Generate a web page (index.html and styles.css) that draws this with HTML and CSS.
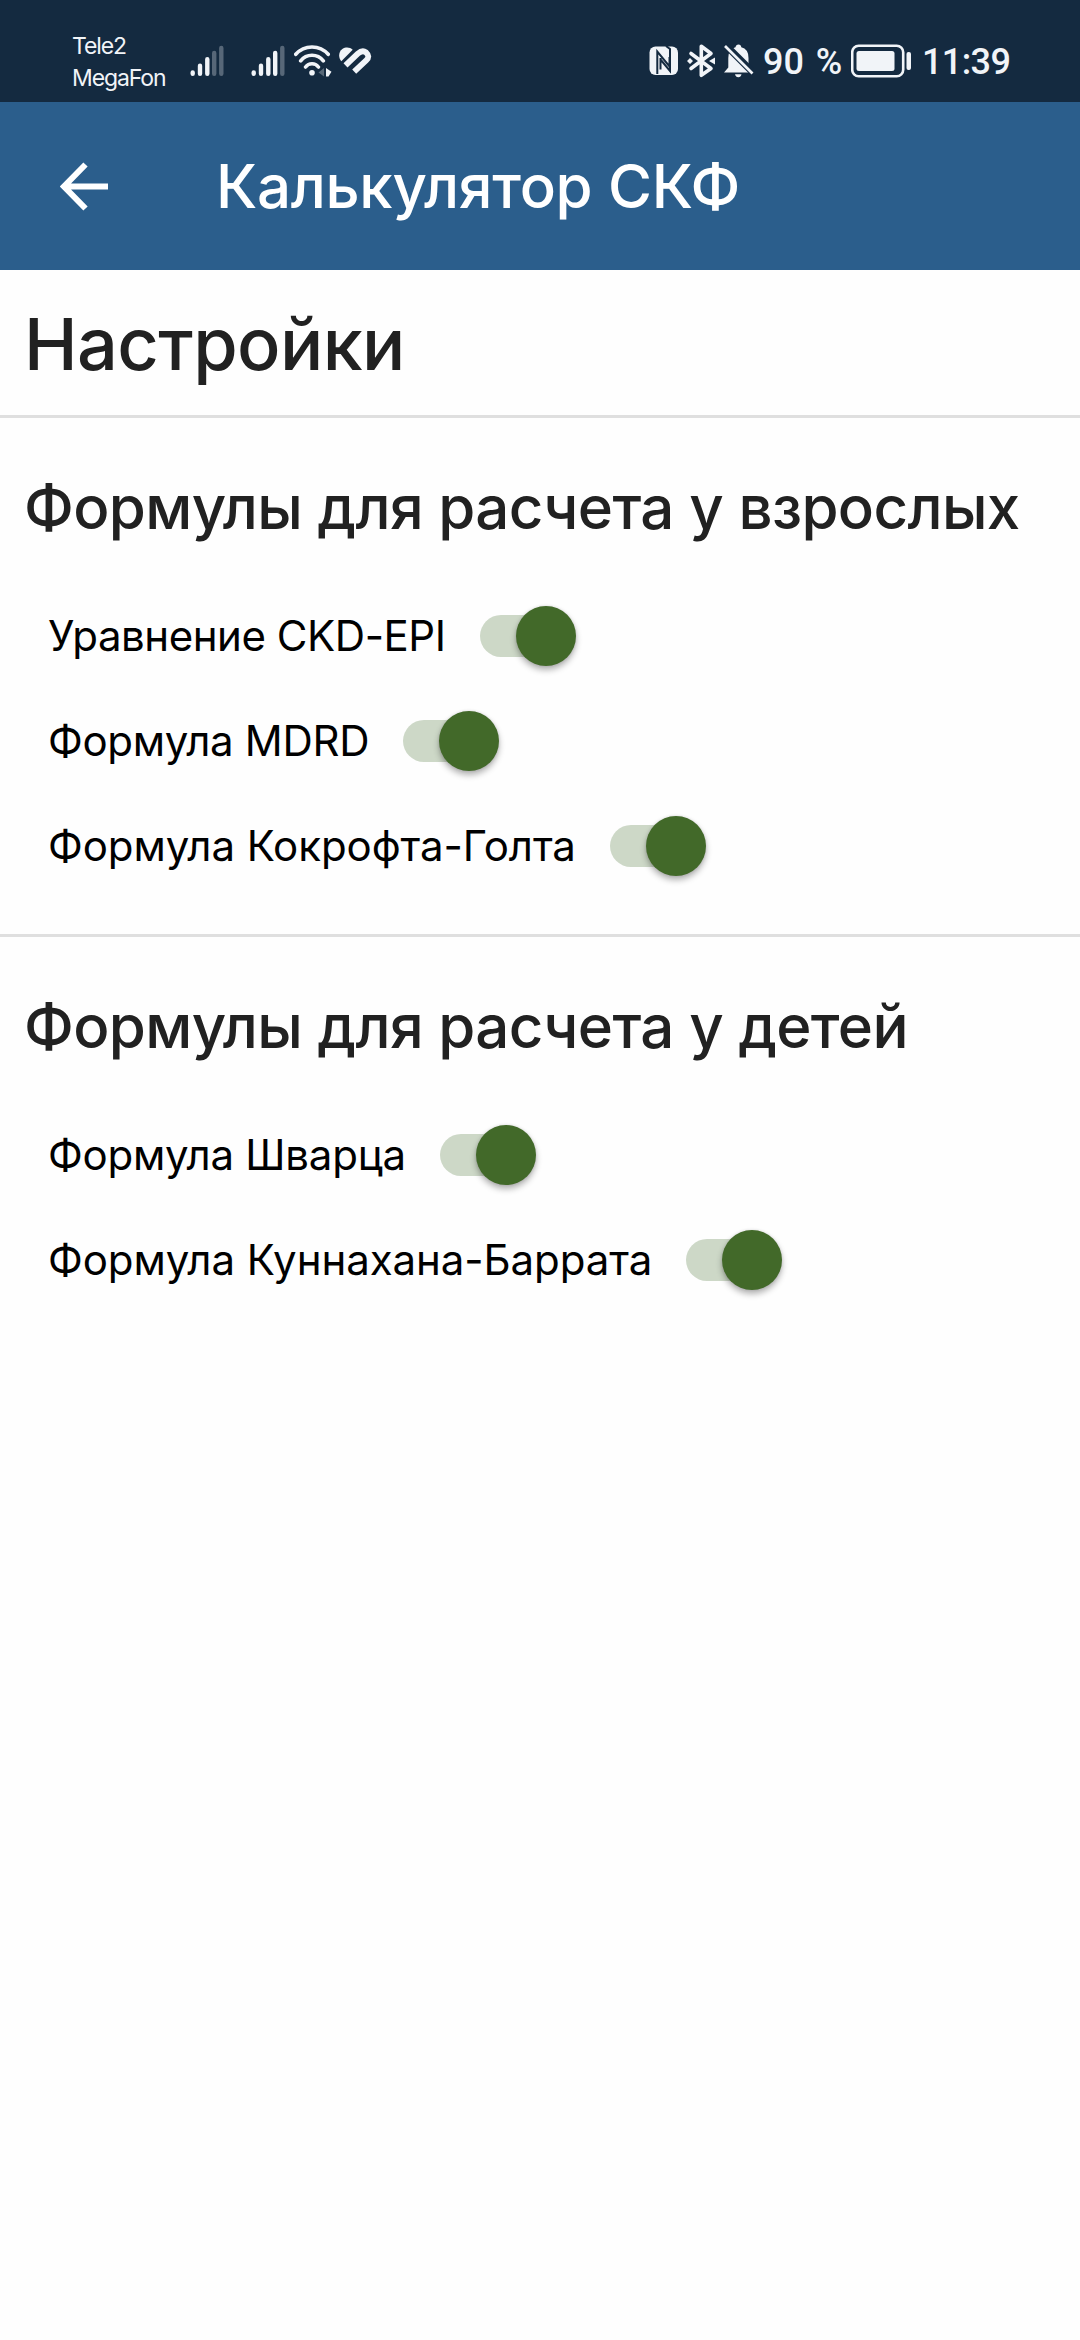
FILE: index.html
```
<!DOCTYPE html>
<html lang="ru">
  <head>
    <meta charset="UTF-8" />
    <meta name="viewport" content="width=device-width, initial-scale=1.0" />
    <title>Калькулятор СКФ</title>
    <link rel="stylesheet" href="styles.css" />
  </head>
  <body>
    <div class="status-bar">
      <div class="carriers">
        <span>Tele2</span>
        <span>MegaFon</span>
      </div>
      <div class="status-left">
        <svg class="signal" width="34" height="32" viewBox="0 0 34 32">
          <path d="M2.7 27.5v1.3M10 20.7v8.1M17.3 14.2v14.6" />
          <path class="dim" d="M24.2 8v20.8M31.3 3v25.8" />
        </svg>
        <svg class="signal" width="34" height="32" viewBox="0 0 34 32">
          <path d="M2.7 27.5v1.3M10 20.7v8.1M17.3 14.2v14.6M24.2 8v20.8" />
          <path class="dim" d="M31.3 3v25.8" />
        </svg>
        <svg class="wifi" width="38" height="32" viewBox="0 0 38 32">
          <path class="arc" d="M1.8 9.3a21.5 21.5 0 0 1 32.4 0M6.7 15.8a14.3 14.3 0 0 1 22.6 0M11.6 22a8 8 0 0 1 12.8 0" />
          <circle cx="18" cy="27.8" r="2.8" />
          <path class="dim" d="M30 23v8.5l-5.5-4z" />
          <path d="M32 23l5.5 3.8-3 4.7H32z" />
        </svg>
        <svg class="health" width="33" height="28" viewBox="0 0 33 28">
          <path d="M2.3 14.3C-1 10.5-.3 4.5 3.3 2C7-.4 11 .2 13.7 2.8z" />
          <path class="band" d="M6.5 18.3L18.8 6.6Q23.3 2.7 27 5.3Q31.5 9.5 27.2 13.4L15.2 24.7" />
        </svg>
      </div>
      <div class="status-right">
        <svg width="30" height="30" viewBox="0 0 30 30">
          <rect x="0.5" y="0.5" width="28.5" height="28.5" rx="6" />
          <path class="cut" d="M8.3 28V5.5L20.5 20.5V11M11.5 12v11.500M11.5 13.5L21 25V3L17 0" />
        </svg>
        <svg class="bluetooth" width="29" height="34" viewBox="0 0 29 34">
          <path d="M4 9.5L24 24.5L14.3 31.3V2.2L24 9.5L4 24.5" />
          <path class="dot" d="M0 17l3-3 3 3-3 3zM22 17l6-3.5v7z" />
        </svg>
        <svg class="bell" width="30" height="34" viewBox="0 0 30 34">
          <path d="M0 28.5L4.3 23.5V14Q4.3 5 11.5 3.3Q12 .5 14.5 .5Q17 .5 17.3 3.3Q24.500 5 24.5 14V23.5L28.5 28.5zM11 30.3h6.5q-.6 3-3.2 3t-3.3-3z" />
          <path class="gap" d="M1.5 1L30 29.5" />
          <path class="slash" d="M1 2L28.5 29.5" />
        </svg>
        <span class="percent">90 %</span>
        <svg class="battery" width="62" height="34" viewBox="0 0 62 34">
          <rect class="frame" x="1.2" y="1.7" width="51" height="30.5" rx="6.5" />
          <rect x="5.5" y="7" width="38" height="20" rx="2.5" />
          <rect x="55.5" y="8" width="4.5" height="18" rx="2" />
        </svg>
        <span class="clock">11:39</span>
      </div>
    </div>

    <header class="app-bar">
      <svg class="back" width="49" height="49" viewBox="0 0 49 49">
        <path d="M48 24.5H5M25.5 2.5L4 24.5L25.5 46.5" />
      </svg>
      <span class="app-title">Калькулятор СКФ</span>
    </header>

    <main>
      <h1 class="page-title">Настройки</h1>

      <section class="formulas">
        <h2>Формулы для расчета у взрослых</h2>
        <div class="formula-item">
          <span class="label label-ckd">Уравнение CKD-EPI</span>
          <span class="switch"><span class="thumb"></span></span>
        </div>
        <div class="formula-item">
          <span class="label label-mdrd">Формула MDRD</span>
          <span class="switch"><span class="thumb"></span></span>
        </div>
        <div class="formula-item">
          <span class="label">Формула Кокрофта-Голта</span>
          <span class="switch"><span class="thumb"></span></span>
        </div>
      </section>

      <section class="formulas">
        <h2>Формулы для расчета у детей</h2>
        <div class="formula-item">
          <span class="label label-schwartz">Формула Шварца</span>
          <span class="switch"><span class="thumb"></span></span>
        </div>
        <div class="formula-item">
          <span class="label">Формула Куннахана-Баррата</span>
          <span class="switch"><span class="thumb"></span></span>
        </div>
      </section>
    </main>
  </body>
</html>
```
FILE: styles.css
```
* {
  box-sizing: border-box;
}
body {
  margin: 0;
  font-family: Inter, Roboto, sans-serif;
  background-color: #fefefe;
  color: #000;
}
svg {
  display: block;
  flex-shrink: 0;
}

/* status bar */
.status-bar {
  display: flex;
  align-items: center;
  height: 102px;
  padding: 20px 70px 0 72px;
  background-color: #142a40;
  color: #f1f4f8;
}
.status-bar svg {
  fill: #f1f4f8;
}
.carriers {
  display: flex;
  flex-direction: column;
  width: 118px;
  padding-top: 1px;
  font-size: 23px;
  line-height: 32px;
  letter-spacing: -1.1px;
}
.status-left {
  display: flex;
  align-items: center;
}
.signal {
  margin-right: 27px;
}
.signal + .wifi {
  margin-left: -18px;
}
.signal path {
  stroke: #f1f4f8;
  stroke-width: 4.4;
  stroke-linecap: round;
}
.status-bar .dim {
  opacity: 0.3;
}
.wifi .arc {
  fill: none;
  stroke: #f1f4f8;
  stroke-width: 3.6;
  stroke-linecap: round;
}
.health {
  margin-left: 7px;
}
.health .band {
  fill: none;
  stroke: #f1f4f8;
  stroke-width: 5.8;
}
.status-right {
  display: flex;
  align-items: center;
  margin-left: auto;
}
.status-right .cut {
  fill: none;
  stroke: #142a40;
  stroke-width: 2;
}
.bluetooth {
  margin-left: 8px;
}
.bluetooth path {
  fill: none;
  stroke: #f1f4f8;
  stroke-width: 3.6;
  stroke-linejoin: round;
  stroke-linecap: round;
}
.bluetooth .dot {
  fill: #f1f4f8;
  stroke: none;
}
.bell {
  margin-left: 8px;
}
.bell .gap {
  stroke: #142a40;
  stroke-width: 7;
}
.bell .slash {
  stroke: #f1f4f8;
  stroke-width: 2.6;
}
.percent,
.clock {
  padding-top: 1px;
  font-family: Roboto, sans-serif;
  font-size: 36px;
  line-height: 36px;
  font-weight: 500;
}
.percent {
  width: 97px;
  padding-left: 9px;
  word-spacing: 3px;
  white-space: nowrap;
}
.clock {
  width: 88px;
  margin-left: 9px;
  letter-spacing: -0.6px;
}
.battery .frame {
  fill: none;
  stroke: #f1f4f8;
  stroke-width: 2.6;
}

/* app bar */
.app-bar {
  display: flex;
  align-items: center;
  height: 168px;
  padding-left: 60px;
  background-color: #2b5e8c;
  color: #fff;
}
.back path {
  fill: none;
  stroke: #fff;
  stroke-width: 6;
}
.app-title {
  margin-left: 107px;
  font-size: 60px;
  font-weight: 500;
  letter-spacing: -0.3px;
}

/* settings */
.page-title {
  height: 145px;
  margin: 0;
  padding-left: 24px;
  font-size: 72px;
  line-height: 147px;
  font-weight: 500;
  letter-spacing: -0.6px;
  color: #212121;
}
.formulas {
  padding-bottom: 36px;
  border-top: 3px solid #dfdfdf;
}
.formulas h2 {
  height: 165px;
  margin: 0;
  padding: 14px 0 0 24px;
  font-size: 60px;
  line-height: 151px;
  font-weight: 500;
  letter-spacing: -0.64px;
  white-space: nowrap;
  color: #212121;
}
.formula-item {
  display: flex;
  align-items: center;
  height: 105px;
  padding-left: 48px;
}
.label {
  font-size: 42px;
  letter-spacing: -0.08px;
  white-space: nowrap;
}
.label-ckd {
  letter-spacing: -0.46px;
}
.label-mdrd {
  letter-spacing: -0.3px;
}
.label-schwartz {
  letter-spacing: -0.24px;
}
.switch {
  display: flex;
  align-items: center;
  justify-content: flex-end;
  width: 90px;
  height: 42px;
  margin-left: 34px;
  border-radius: 21px;
  background-color: #cdd8c7;
}
.thumb {
  flex-shrink: 0;
  width: 60px;
  height: 60px;
  margin-right: -6px;
  border-radius: 50%;
  background-color: #426929;
  box-shadow: 0 4px 6px rgba(0, 0, 0, 0.3), 0 0 3px rgba(0, 0, 0, 0.12);
}
```
